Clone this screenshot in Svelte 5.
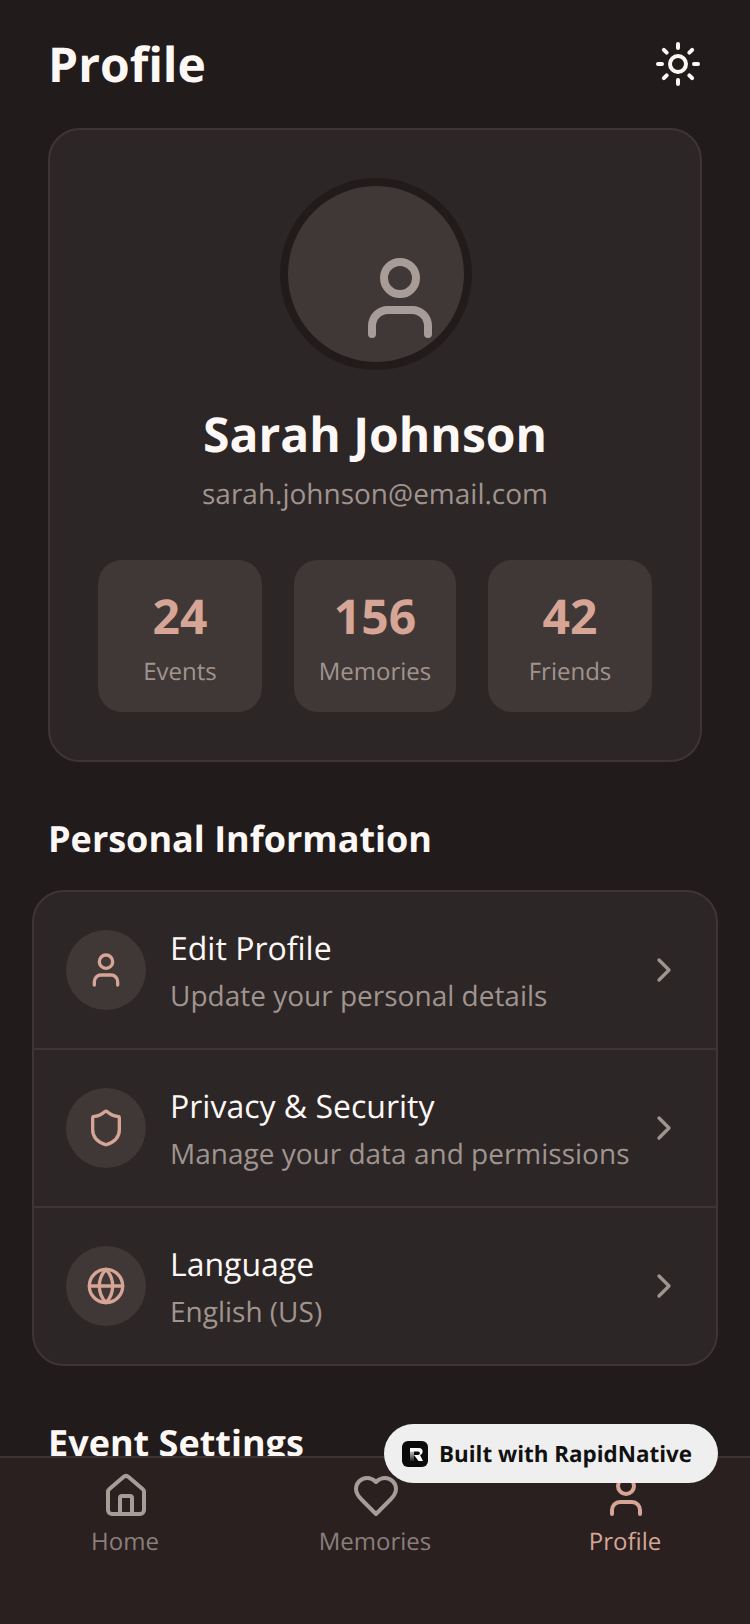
<script>
	const stats = [
		{ value: '24', label: 'Events' },
		{ value: '156', label: 'Memories' },
		{ value: '42', label: 'Friends' }
	];

	const personal = [
		{ icon: 'user', title: 'Edit Profile', sub: 'Update your personal details' },
		{ icon: 'shield', title: 'Privacy & Security', sub: 'Manage your data and permissions' },
		{ icon: 'globe', title: 'Language', sub: 'English (US)' }
	];

	const tabs = [
		{ icon: 'home', label: 'Home' },
		{ icon: 'heart', label: 'Memories' },
		{ icon: 'user', label: 'Profile', active: true }
	];
</script>

{#snippet icon(name, size, stroke = 2)}
	<svg width={size} height={size} viewBox="0 0 24 24" fill="none" stroke="currentColor" stroke-width={stroke} stroke-linecap="round" stroke-linejoin="round">
		{#if name === 'user'}
			<circle cx="12" cy="7" r="4" />
			<path d="M5 21v-2a4 4 0 0 1 4-4h6a4 4 0 0 1 4 4v2" />
		{:else if name === 'shield'}
			<path d="M20 13c0 5-3.5 7.5-7.66 8.95a1 1 0 0 1-.67-.01C7.5 20.5 4 18 4 13V6a1 1 0 0 1 1-1c2 0 4.5-1.2 6.24-2.72a1.17 1.17 0 0 1 1.52 0C14.51 3.81 17 5 19 5a1 1 0 0 1 1 1z" />
		{:else if name === 'globe'}
			<circle cx="12" cy="12" r="10" />
			<path d="M12 2a14.5 14.5 0 0 0 0 20 14.5 14.5 0 0 0 0-20" />
			<path d="M2 12h20" />
		{:else if name === 'home'}
			<path d="M15 21v-8a1 1 0 0 0-1-1h-4a1 1 0 0 0-1 1v8" />
			<path d="M3 10a2 2 0 0 1 .709-1.528l7-5.999a2 2 0 0 1 2.582 0l7 5.999A2 2 0 0 1 21 10v9a2 2 0 0 1-2 2H5a2 2 0 0 1-2-2z" />
		{:else if name === 'heart'}
			<path d="M19 14c1.49-1.46 3-3.21 3-5.5A5.5 5.5 0 0 0 16.5 3c-1.76 0-3 .5-4.5 2-1.5-1.5-2.74-2-4.5-2A5.5 5.5 0 0 0 2 8.5c0 2.3 1.5 4.05 3 5.5l7 7Z" />
		{:else if name === 'chevron'}
			<path d="m9 18 6-6-6-6" />
		{:else if name === 'sun'}
			<circle cx="12" cy="12" r="4" />
			<path d="M12 2v2M12 20v2M4.93 4.93l1.41 1.41M17.66 17.66l1.41 1.41M2 12h2M20 12h2M6.34 17.66l-1.41 1.41M19.07 4.93l-1.41 1.41" />
		{/if}
	</svg>
{/snippet}

<div class="screen">
	<main>
		<header>
			<h1>Profile</h1>
			<span class="theme">{@render icon('sun', 48)}</span>
		</header>

		<section class="card">
			<div class="avatar">
				<span class="avatar-icon">{@render icon('user', 96)}</span>
			</div>
			<h2>Sarah Johnson</h2>
			<p class="email">sarah.johnson@email.com</p>
			<div class="stats">
				{#each stats as s}
					<div class="stat">
						<span class="num">{s.value}</span>
						<span class="lbl">{s.label}</span>
					</div>
				{/each}
			</div>
		</section>

		<h3>Personal Information</h3>
		<div class="list">
			{#each personal as row}
				<div class="row">
					<span class="bubble">{@render icon(row.icon, 40)}</span>
					<div class="text">
						<span class="title">{row.title}</span>
						<span class="sub">{row.sub}</span>
					</div>
					<span class="chev">{@render icon('chevron', 40)}</span>
				</div>
			{/each}
		</div>

		<h3 class="next">Event Settings</h3>
	</main>

	<nav>
		{#each tabs as t}
			<div class="tab" class:active={t.active}>
				{@render icon(t.icon, 48)}
				<span>{t.label}</span>
			</div>
		{/each}
	</nav>

	<div class="badge">
		<svg width="26" height="26" viewBox="0 0 26 26">
			<defs>
				<linearGradient id="stem" x1="0" y1="0" x2="0" y2="1">
					<stop offset="0" stop-color="#ddd" />
					<stop offset="1" stop-color="#222" />
				</linearGradient>
			</defs>
			<rect width="26" height="26" rx="6" fill="#0b0b0b" />
			<rect x="8" y="9" width="4" height="11" fill="url(#stem)" />
			<path d="M8 7h9a3.6 3.6 0 0 1 3.6 3.6c0 1.7-1 2.9-2.6 3.4l3 6h-4.4l-4.6-6h4.2a1.7 1.7 0 0 0 0-3.4H8z" fill="#fff" />
		</svg>
		<span>Built with RapidNative</span>
	</div>
</div>

<style>
	:global(body) {
		background: #211b1b;
	}

	.screen {
		position: relative;
		width: 750px;
		height: 1624px;
		display: flex;
		flex-direction: column;
		overflow: hidden;
		background: #211b1b;
		font-family: 'Open Sans', sans-serif;
		text-rendering: geometricPrecision;
		color: #fdf8f5;
	}

	main {
		flex: 1;
		min-height: 0;
		overflow: hidden;
		padding: 32px 48px 0;
	}

	header {
		display: flex;
		justify-content: space-between;
		align-items: center;
		margin-bottom: 32px;
	}

	h1 {
		margin: 0;
		padding-top: 2px;
		font-size: 48px;
		line-height: 62px;
		font-weight: 700;
	}

	.theme {
		display: flex;
	}

	.card {
		display: flex;
		flex-direction: column;
		align-items: center;
		padding: 48px;
		background: #2c2626;
		border: 2px solid #3e3636;
		border-radius: 32px;
	}

	.avatar {
		width: 192px;
		height: 192px;
		margin-left: 2px;
		box-sizing: border-box;
		display: flex;
		align-items: center;
		justify-content: center;
		background: #403837;
		border: 8px solid #211b1b;
		border-radius: 50%;
		color: #a89c99;
	}

	/* the glyph is twice the size of its box, so it hangs off to the lower right */
	.avatar-icon {
		width: 48px;
		height: 48px;
		display: block;
	}

	.avatar-icon svg {
		display: block;
	}

	h2 {
		margin: 32px 0 0;
		padding-top: 2px;
		font-size: 48px;
		line-height: 62px;
		font-weight: 700;
	}

	.email {
		margin: 8px 0 0;
		padding-top: 2px;
		font-size: 28px;
		line-height: 36px;
		color: #a0948f;
	}

	.stats {
		display: grid;
		grid-template-columns: 1fr 162px 1fr;
		gap: 32px;
		align-self: stretch;
		margin-top: 48px;
	}

	.stat {
		display: flex;
		flex-direction: column;
		align-items: center;
		padding: 24px 0 22px;
		background: #403837;
		border-radius: 24px;
	}

	.num {
		padding-top: 2px;
		font-size: 48px;
		line-height: 62px;
		font-weight: 700;
		color: #d6a595;
	}

	.lbl {
		margin-top: 4px;
		padding-top: 2px;
		font-size: 24px;
		line-height: 36px;
		color: #a0948f;
	}

	h3 {
		margin: 52px 0 28px;
		padding-top: 2px;
		font-size: 36px;
		line-height: 46px;
		font-weight: 700;
	}

	.list {
		margin: 0 -16px;
		background: #2c2626;
		border: 2px solid #3e3636;
		border-radius: 32px;
	}

	.row {
		display: flex;
		align-items: center;
		gap: 24px;
		height: 156px;
		padding: 0 32px;
	}

	.row + .row {
		border-top: 2px solid #3e3636;
	}

	.bubble {
		flex: none;
		width: 80px;
		height: 80px;
		display: flex;
		align-items: center;
		justify-content: center;
		background: #403837;
		border-radius: 50%;
		color: #d6a595;
	}

	.text {
		flex: 1;
		min-width: 0;
		display: flex;
		flex-direction: column;
		gap: 4px;
	}

	.title {
		padding-top: 2px;
		font-size: 32px;
		line-height: 42px;
	}

	.sub {
		padding-top: 4px;
		font-size: 28px;
		line-height: 36px;
		color: #a0948f;
		white-space: nowrap;
	}

	.chev {
		display: flex;
		color: #a0948f;
	}

	.next {
		margin-top: 52px;
	}

	nav {
		flex: none;
		height: 168px;
		box-sizing: border-box;
		display: flex;
		padding-top: 14px;
		background: #2a2020;
		border-top: 2px solid #3e3333;
	}

	.tab {
		flex: 1;
		display: flex;
		flex-direction: column;
		align-items: center;
		color: #a89c99;
	}

	.tab svg {
		margin-left: 2px;
	}

	.tab span {
		padding-top: 2px;
		font-size: 24px;
		line-height: 34px;
		color: #8a7e7b;
		margin-top: 3px;
	}

	.tab.active {
		color: #d6a595;
	}

	.tab.active span {
		color: #d6a595;
	}

	.badge {
		position: absolute;
		left: 384px;
		top: 1424px;
		height: 59px;
		width: 334px;
		box-sizing: border-box;
		display: flex;
		align-items: center;
		gap: 11px;
		padding-left: 18px;
		background: #efefef;
		border-radius: 30px;
		color: #111;
		font-size: 22.4px;
		font-weight: 700;
	}
</style>
